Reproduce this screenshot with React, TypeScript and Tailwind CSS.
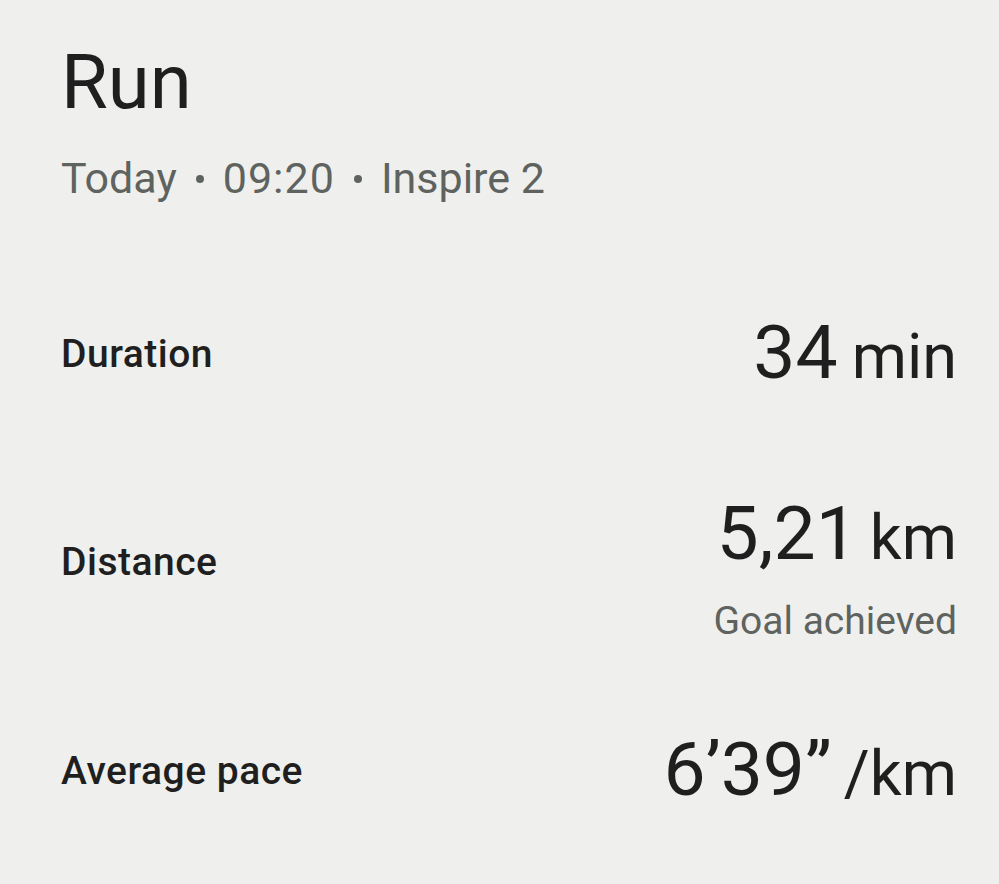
import React from "react";

const font = { fontFamily: "Roboto, 'Noto Sans', Arial, sans-serif" };

function Row({
  label,
  children,
  h,
  labelClass = "",
  valueClass = "",
}: {
  label: string;
  children: React.ReactNode;
  h: string;
  labelClass?: string;
  valueClass?: string;
}) {
  return (
    <div className={`flex items-center justify-between ${h}`}>
      <div className={`text-[39px] leading-[39px] font-medium text-[#1f1f1f] tracking-[0.5px] ${labelClass}`}>{label}</div>
      <div className={`flex flex-col items-end ${valueClass}`}>{children}</div>
    </div>
  );
}

function Dot() {
  return <span className="mx-[19px] w-[8px] h-[8px] rounded-full bg-[#5f6360] inline-block" />;
}

export default function App() {
  return (
    <div className="w-[999px] h-[884px] bg-[#eff0ed] pl-[61px] pr-[42px] pt-[44px] overflow-hidden" style={font}>
      <div className="text-[76px] leading-[76px] text-[#1f1f1f]">Run</div>
      <div className="mt-[37px] text-[43px] leading-[43px] text-[#5f6360] flex items-center">
        <span>Today</span>
        <Dot />
        <span className="tracking-[1px]">09:20</span>
        <Dot />
        <span>Inspire 2</span>
      </div>
      <div className="mt-[50px] flex flex-col">
        <Row label="Duration" h="h-[208px]">
          <div className="text-[#1f1f1f] text-[75px] leading-[75px] whitespace-nowrap">
            <span>34</span>
            <span className="text-[63px] ml-[14px]">min</span>
          </div>
        </Row>
        <Row label="Distance" h="h-[206px]" labelClass="mt-[2px]" valueClass="mt-[14px]">
          <div className="text-[#1f1f1f] text-[75px] leading-[75px] whitespace-nowrap">
            <span>5,21</span>
            <span className="text-[63px] ml-[12px]">km</span>
          </div>
          <div className="mt-[27px] text-[39px] leading-[39px] text-[#5f6360]">Goal achieved</div>
        </Row>
        <Row label="Average pace" h="h-[214px]">
          <div className="text-[#1f1f1f] text-[75px] leading-[75px] whitespace-nowrap">
            <span>6’39”</span>
            <span className="text-[63px] ml-[12px]">/km</span>
          </div>
        </Row>
      </div>
    </div>
  );
}
